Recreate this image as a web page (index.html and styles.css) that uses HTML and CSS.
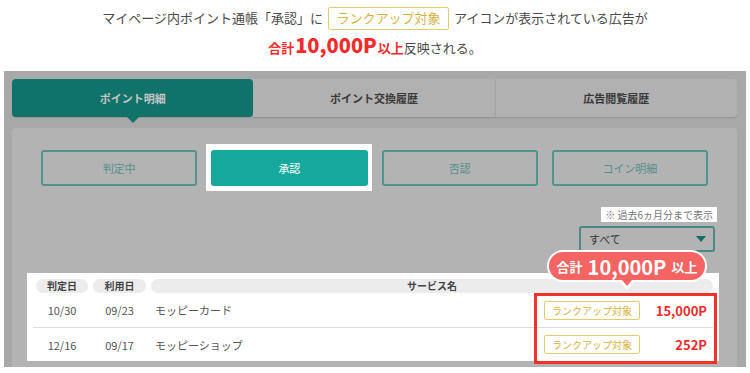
FILE: index.html
```html
<!DOCTYPE html>
<html lang="ja">
<head>
    <meta charset="UTF-8">
    <meta name="viewport" content="width=device-width, initial-scale=1.0">
    <title>ポイント明細</title>
    <link rel="stylesheet" href="styles.css">
</head>
<body>

    <div class="lead">
        <p class="lead-line">マイページ内ポイント通帳「承認」に<span class="rank-badge lead-badge">ランクアップ対象</span>アイコンが表示されている広告が</p>
        <p class="lead-line"><span class="red">合計<b class="big">10,000P</b>以上</span>反映される。</p>
    </div>

    <div class="frame">
        <ul class="tabs">
            <li class="tab active">ポイント明細</li>
            <li class="tab">ポイント交換履歴</li>
            <li class="tab">広告閲覧履歴</li>
        </ul>

        <div class="panel">
            <div class="filters">
                <button type="button" class="filter">判定中</button>
                <div class="spotlight">
                    <button type="button" class="filter current">承認</button>
                </div>
                <button type="button" class="filter">否認</button>
                <button type="button" class="filter">コイン明細</button>
            </div>

            <div class="note-row">
                <span class="note">※ 過去6ヵ月分まで表示</span>
            </div>

            <div class="select-row">
                <div class="select">
                    <span>すべて</span>
                    <svg width="10" height="6" viewBox="0 0 10 6"><path d="M0 0h10L5 6z" fill="#1d6a60"/></svg>
                </div>
            </div>

            <div class="history">
                <div class="total-tip"><span class="small">合計</span><b>10,000P</b><span class="small">以上</span></div>

                <div class="history-head">
                    <span class="pill col-date">判定日</span>
                    <span class="pill col-date">利用日</span>
                    <span class="pill col-name">サービス名</span>
                </div>

                <div class="row">
                    <span class="col-date">10/30</span>
                    <span class="col-date">09/23</span>
                    <span class="col-name">モッピーカード</span>
                    <span class="rank-badge">ランクアップ対象</span>
                    <span class="points">15,000P</span>
                </div>
                <div class="row">
                    <span class="col-date">12/16</span>
                    <span class="col-date">09/17</span>
                    <span class="col-name">モッピーショップ</span>
                    <span class="rank-badge">ランクアップ対象</span>
                    <span class="points">252P</span>
                </div>

                <div class="red-box"></div>
            </div>
        </div>
    </div>

</body>
</html>
```

FILE: styles.css
```css
body {
    margin: 0;
    background: #fff;
    font-family: "Noto Sans CJK JP", "Noto Sans", sans-serif;
    color: #4a4a4a;
}
p {
    margin: 0;
}
ul {
    margin: 0;
    padding: 0;
    list-style: none;
}
button {
    font-family: inherit;
}

/* header text */
.lead {
    padding-top: 5px;
    height: 66px;
    text-align: center;
}
.lead-line {
    font-size: 13px;
    line-height: 26px;
    height: 27px;
}
.lead-line .red {
    color: #f42b2b;
    font-weight: bold;
}
.lead-line .big {
    font-size: 20px;
    margin: 0 1px;
}
.rank-badge {
    display: inline-flex;
    align-items: center;
    justify-content: center;
    box-sizing: border-box;
    border: 1px solid #e6cd69;
    border-radius: 2px;
    background: #fff;
    color: #d9b23e;
    font-size: 10px;
    width: 96px;
    height: 19px;
}
.lead-badge {
    font-size: 13px;
    width: 121px;
    height: 23px;
    margin: 0 5px;
    vertical-align: middle;
    position: relative;
    top: -1px;
}

/* dimmed frame */
.frame {
    margin-left: 4px;
    width: 742px;
    height: 296px;
    box-sizing: border-box;
    padding: 8px 9px 0 8px;
    background: #a8a8a8;
    overflow: hidden;
}
.tabs {
    display: flex;
    height: 38px;
    margin-bottom: 11px;
}
.tab {
    flex: 1;
    display: flex;
    align-items: center;
    justify-content: center;
    background: #b1b1b1;
    color: #3a3a3a;
    font-size: 11px;
    font-weight: bold;
    box-shadow: 0 1px 1px rgba(0, 0, 0, 0.12);
    position: relative;
}
.tab:first-child {
    border-radius: 4px 0 0 4px;
}
.tab:last-child {
    border-radius: 0 4px 4px 0;
    border-left: 1px solid #a2a2a2;
}
.tab.active {
    background: #0f736a;
    color: #c4c4c4;
    border-radius: 4px;
}
.tab.active::after {
    content: "";
    position: absolute;
    bottom: -6px;
    left: 50%;
    margin-left: -6px;
    border-left: 6px solid transparent;
    border-right: 6px solid transparent;
    border-top: 6px solid #0f736a;
}

.panel {
    background: #b3b3b3;
    border-radius: 4px 4px 0 0;
    padding: 22px 18px 0 15px;
    height: 260px;
}
.filters {
    display: grid;
    grid-template-columns: repeat(4, 1fr);
    gap: 14px;
    margin: 0 11px 0 14px;
}
.filter {
    height: 36px;
    border: 2px solid #4f958b;
    border-radius: 3px;
    background: transparent;
    color: #55908a;
    font-size: 11px;
}
/* white highlight frame round the current filter */
.spotlight {
    display: flex;
    background: #fff;
    padding: 6px 4px 5px 5px;
    margin: -6px -4px -5px -5px;
}
.spotlight .filter {
    flex: 1;
}
.filter.current {
    background: #15a99d;
    border-color: #15a99d;
    color: #fff;
}

.note-row {
    display: flex;
    justify-content: flex-end;
    margin-top: 21px;
    margin-right: 2px;
}
.note {
    background: #fff;
    color: #777;
    font-size: 10px;
    line-height: 15px;
    padding: 0 4px;
}
.select-row {
    display: flex;
    justify-content: flex-end;
    margin-top: 4px;
    margin-right: 4px;
}
.select {
    width: 136px;
    height: 26px;
    box-sizing: border-box;
    border: 2px solid #4a8a82;
    border-radius: 3px;
    display: flex;
    align-items: center;
    justify-content: space-between;
    padding: 0 7px 0 8px;
    font-size: 11px;
    color: #333;
}

/* history table (highlighted) */
.history {
    position: relative;
    margin-top: 21px;
    background: #fff;
    padding: 6px 6px 0 6px;
    height: 88px;
    box-sizing: border-box;
}
.history-head {
    display: flex;
    gap: 5px;
    margin-left: 3px;
}
.pill {
    height: 14px;
    line-height: 14px;
    border-radius: 7px;
    background: #ececec;
    font-size: 10px;
    font-weight: bold;
    color: #444;
    text-align: center;
}
.col-date {
    width: 52px;
    flex-shrink: 0;
    text-align: center;
}
.history-head .col-date + .col-date {
    width: 53px;
}
.col-name {
    flex: 1;
}
.row {
    display: flex;
    align-items: center;
    gap: 5px;
    height: 34px;
    padding: 0 6px 0 3px;
    font-size: 11px;
    color: #555;
}
.row + .row {
    border-top: 1px solid #dcdcdc;
    height: 33px;
}
.row .col-date + .col-date {
    width: 53px;
}
.row .col-name {
    padding-left: 4px;
}
.points {
    width: 62px;
    text-align: right;
    font-size: 13px;
    font-weight: bold;
    color: #f12b2b;
}

.red-box {
    position: absolute;
    left: 507px;
    top: 20px;
    width: 183px;
    height: 71px;
    box-sizing: border-box;
    border: 3px solid #f2302c;
}
.total-tip {
    position: absolute;
    top: -23px;
    right: 12px;
    width: 160px;
    height: 32px;
    box-sizing: border-box;
    border: 2px solid #fff;
    border-radius: 16px;
    background: #f46462;
    color: #fff;
    display: flex;
    align-items: center;
    justify-content: center;
    gap: 5px;
    z-index: 2;
}
.total-tip .small {
    font-size: 13px;
    font-weight: bold;
}
.total-tip b {
    font-size: 20px;
}
.total-tip::before {
    content: "";
    position: absolute;
    bottom: -10px;
    left: 50%;
    margin-left: -7px;
    border-left: 7px solid transparent;
    border-right: 7px solid transparent;
    border-top: 8px solid #fff;
}
.total-tip::after {
    content: "";
    position: absolute;
    bottom: -6px;
    left: 50%;
    margin-left: -5px;
    border-left: 5px solid transparent;
    border-right: 5px solid transparent;
    border-top: 6px solid #f46462;
}
```
